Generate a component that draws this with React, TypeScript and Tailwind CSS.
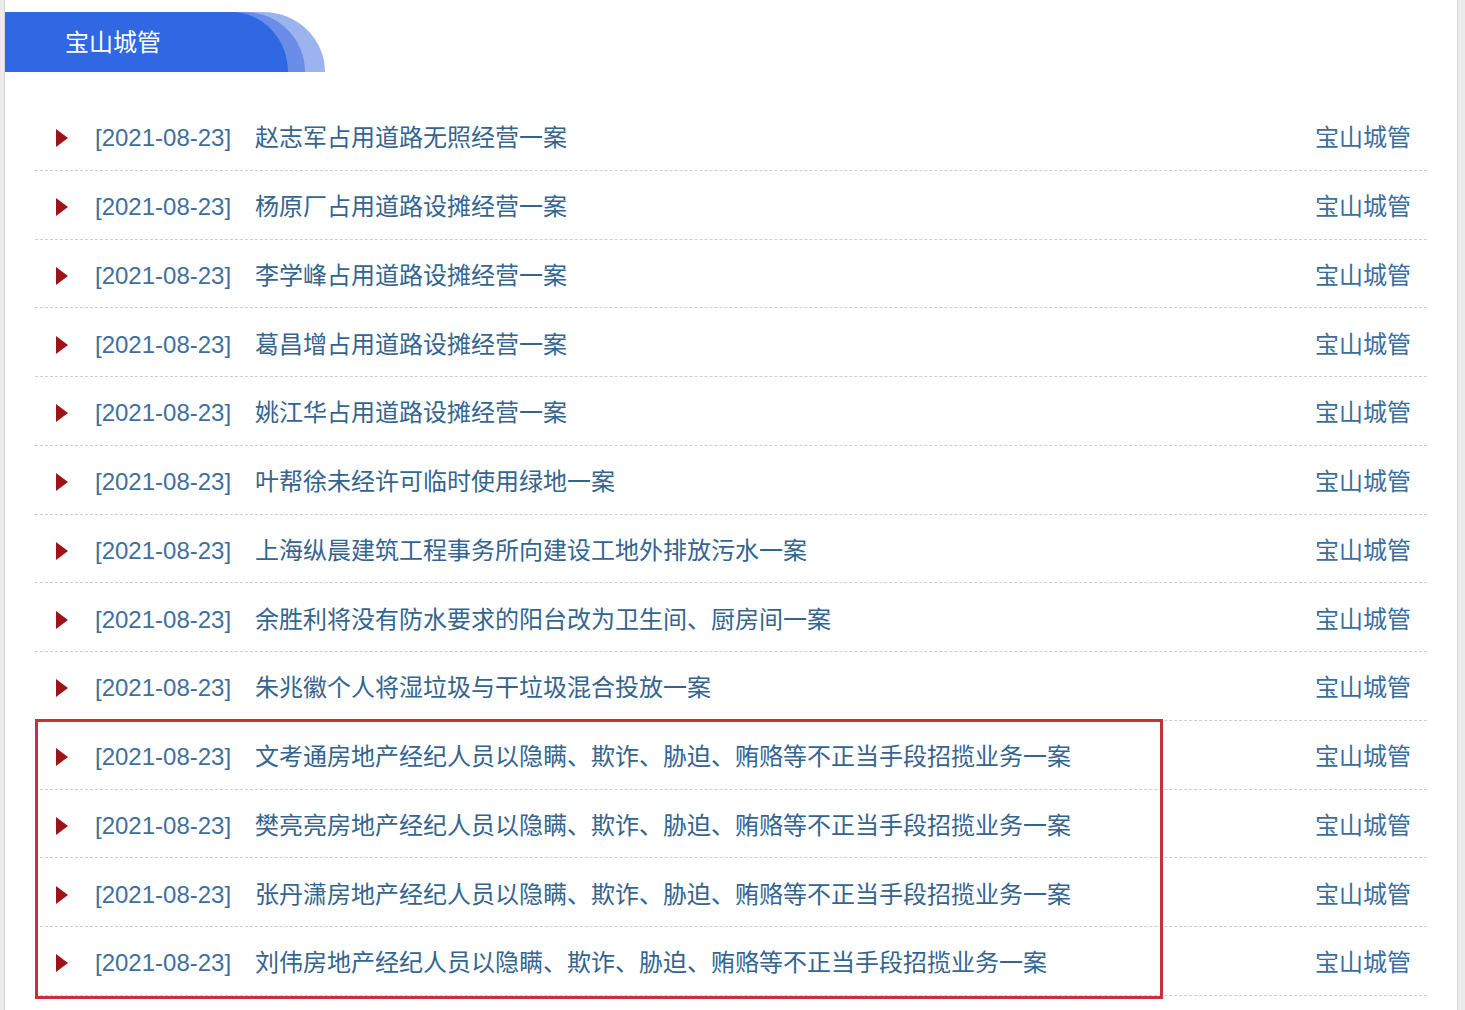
import React from "react";

const rows = [
  "赵志军占用道路无照经营一案",
  "杨原厂占用道路设摊经营一案",
  "李学峰占用道路设摊经营一案",
  "葛昌增占用道路设摊经营一案",
  "姚江华占用道路设摊经营一案",
  "叶帮徐未经许可临时使用绿地一案",
  "上海纵晨建筑工程事务所向建设工地外排放污水一案",
  "余胜利将没有防水要求的阳台改为卫生间、厨房间一案",
  "朱兆徽个人将湿垃圾与干垃圾混合投放一案",
  "文考通房地产经纪人员以隐瞒、欺诈、胁迫、贿赂等不正当手段招揽业务一案",
  "樊亮亮房地产经纪人员以隐瞒、欺诈、胁迫、贿赂等不正当手段招揽业务一案",
  "张丹潇房地产经纪人员以隐瞒、欺诈、胁迫、贿赂等不正当手段招揽业务一案",
  "刘伟房地产经纪人员以隐瞒、欺诈、胁迫、贿赂等不正当手段招揽业务一案",
];

function Row({ title }: { title: string }) {
  return (
    <div className="flex h-[68.75px] items-center border-b border-dashed border-[#cfcfcf] pt-[5px]">
      <svg width="12" height="18" viewBox="0 0 12 18" className="ml-[21px] shrink-0">
        <polygon points="0,0 12,9 0,18" fill="#9c1318" />
      </svg>
      <span className="ml-[27px] w-[160px] shrink-0 text-[24px] leading-none text-[#3f6f9c]">
        [2021-08-23]
      </span>
      <span className="flex-1 text-[24px] leading-none text-[#35648f]">{title}</span>
      <span className="mr-[16px] text-[24px] leading-none text-[#3a6e9c]">宝山城管</span>
    </div>
  );
}

export default function App() {
  return (
    <div
      className="min-h-[1010px] w-full bg-[#ebebeb]"
      style={{ fontFamily: '"Liberation Sans", "Noto Sans CJK SC", sans-serif' }}
    >
      <div className="ml-[4px] min-h-[1010px] w-[1454px] border-l border-r border-[#d6d6d6] bg-white pt-[12px]">
        <div className="relative h-[60px] w-[322px]">
          <svg
            className="absolute inset-0"
            width="322"
            height="60"
            viewBox="0 0 322 60"
          >
            <path d="M0 0 H258 A62 60 0 0 1 320 60 H0 Z" fill="#9bb3ef" />
            <path d="M0 0 H240 A60 60 0 0 1 300 60 H0 Z" fill="#6b8de7" />
            <path d="M0 0 H226 A57 60 0 0 1 283 60 H0 Z" fill="#3067e2" />
          </svg>
          <div className="relative flex h-full items-center pl-[60px] pt-[1px] text-[24px] leading-none text-white">
            宝山城管
          </div>
        </div>
        <div className="ml-[30px] mt-[30px] w-[1392px]">
          {rows.slice(0, 9).map((t, i) => (
            <Row key={i} title={t} />
          ))}
          <div className="relative">
            {rows.slice(9).map((t, i) => (
              <Row key={i} title={t} />
            ))}
            <div className="pointer-events-none absolute left-0 top-[-2px] bottom-[-3px] w-[1128px] border-[3px] border-[#c8303a]" />
          </div>
        </div>
      </div>
    </div>
  );
}
